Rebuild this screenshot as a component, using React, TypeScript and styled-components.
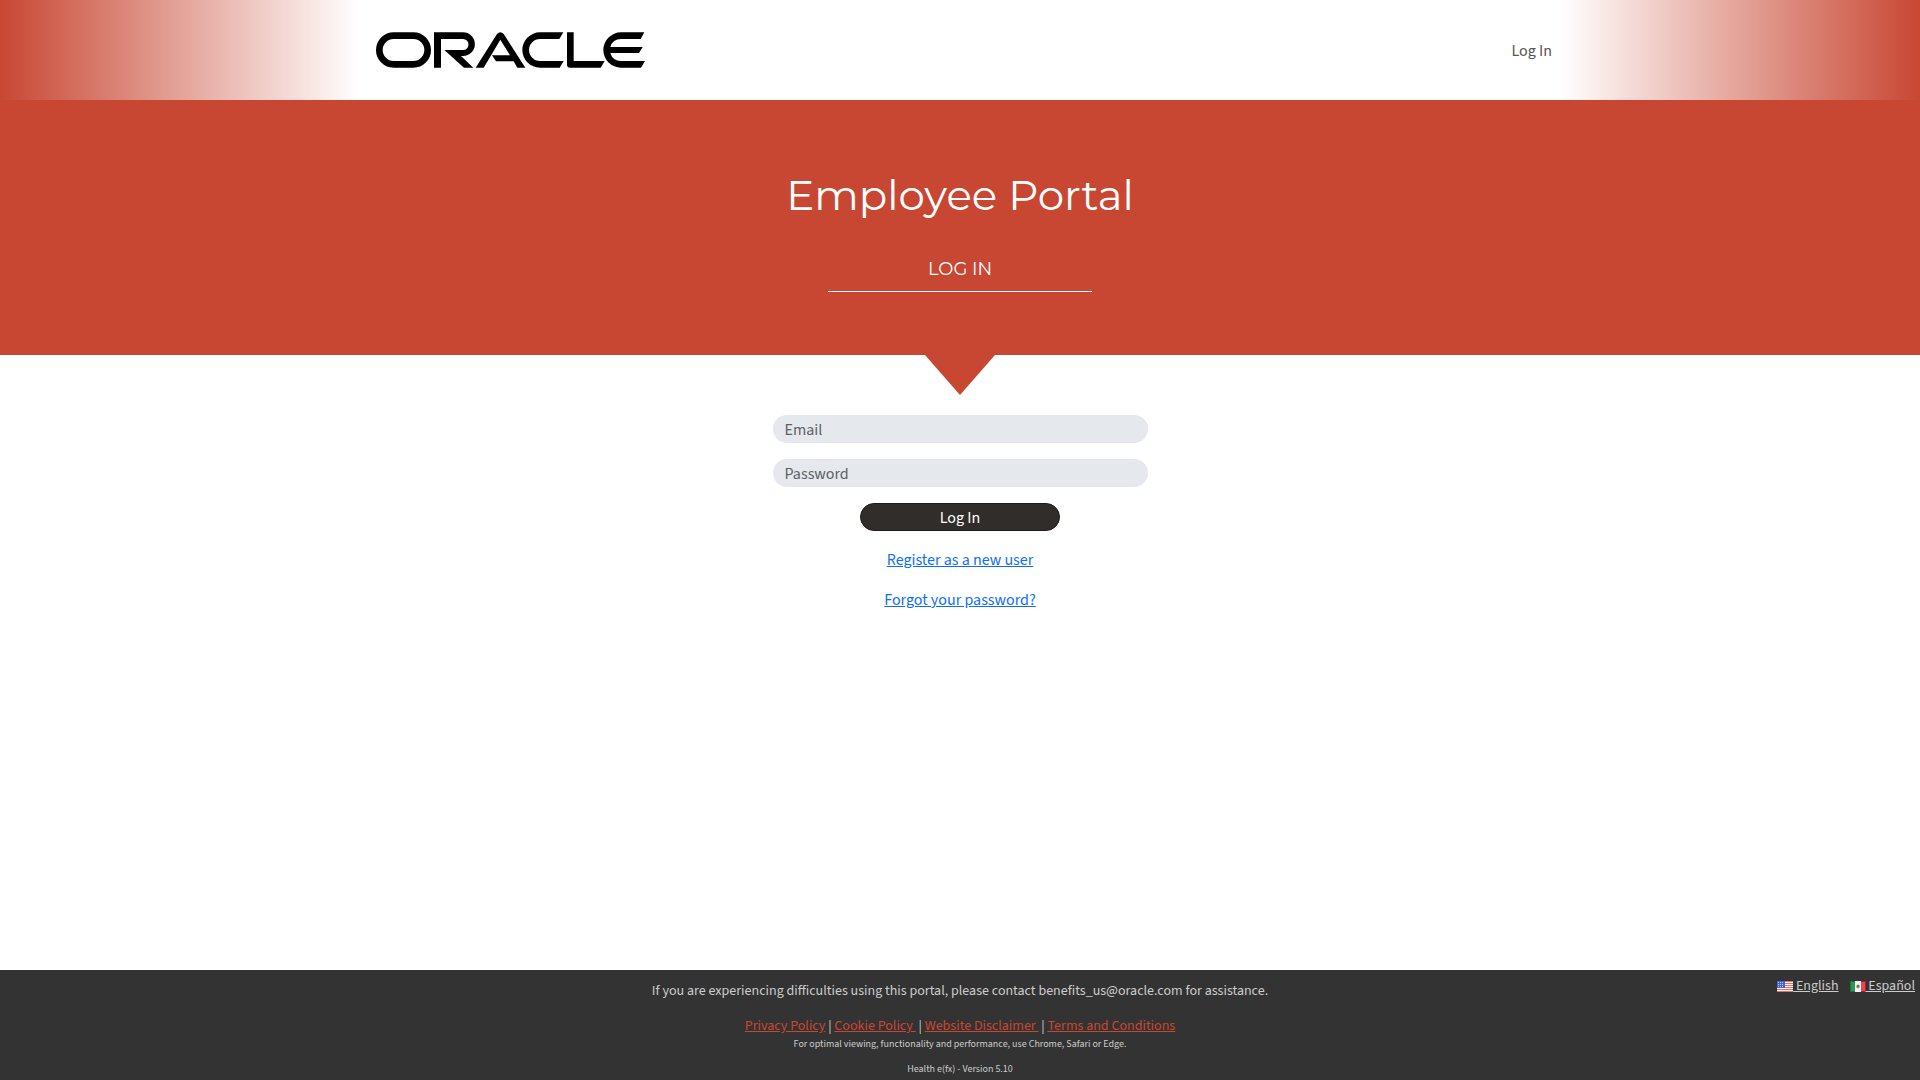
import React from "react";
import styled, { createGlobalStyle } from "styled-components";

const brand = "#c84733";
const bodyFont = `"Source Sans Pro", "Source Sans 3", "Noto Sans CJK JP", sans-serif`;
const headingFont = `Montserrat, Inter, sans-serif`;

const GlobalStyle = createGlobalStyle`
  *, *::before, *::after { box-sizing: border-box; }
  body {
    margin: 0;
    background: #fff;
    color: #212529;
    font: 400 16px/24px ${bodyFont};
  }
`;

const Page = styled.div`
  min-height: 100vh;
  display: flex;
  flex-direction: column;
`;

const Header = styled.header`
  display: flex;
  justify-content: center;
  height: 100px;
  background: linear-gradient(
    to right,
    ${brand} 0,
    #fff 360px,
    #fff calc(100% - 360px),
    ${brand} 100%
  );
`;

const HeaderInner = styled.div`
  flex: 1;
  max-width: 1200px;
  padding: 0 8px 0 16px;
  display: flex;
  align-items: center;
  justify-content: space-between;
  background: #fff;
`;

const Logo = styled.svg`
  display: block;
  width: 269px;
  height: 36px;
`;

const NavLink = styled.a`
  padding-top: 2px;
  color: #555;
  text-decoration: none;
`;

const Hero = styled.section`
  position: relative;
  height: 255px;
  padding-top: 67px;
  display: flex;
  flex-direction: column;
  align-items: center;
  background: ${brand};
  color: #fff;
  font-family: ${headingFont};

  &::after {
    content: "";
    position: absolute;
    top: 100%;
    left: 50%;
    margin-left: -35px;
    border: 35px solid transparent;
    border-top: 40px solid ${brand};
    border-bottom: 0;
  }
`;

const Title = styled.h1`
  margin: 0;
  font-size: 42px;
  line-height: 56px;
  font-weight: 400;
`;

const Subtitle = styled.h2`
  width: 264px;
  margin: 34px 0 0;
  padding-bottom: 10px;
  border-bottom: 1px solid #fff;
  font-size: 18px;
  line-height: 24px;
  font-weight: 400;
  text-align: center;
  text-transform: uppercase;
`;

const Main = styled.main`
  flex: 1;
  padding-top: 60px;
`;

const Form = styled.form`
  width: 375px;
  margin: 0 auto;
  display: flex;
  flex-direction: column;
  align-items: center;
  gap: 16px;
`;

const Field = styled.input`
  width: 100%;
  height: 28px;
  padding: 2px 12px 0;
  border: 0;
  border-radius: 14px;
  background: #e5e8ed;
  color: #212529;
  font: inherit;

  &::placeholder {
    color: #5d6165;
    opacity: 1;
  }
`;

const Submit = styled.button`
  width: 200px;
  height: 28px;
  padding: 2px 0 0;
  border: 1px solid #1f1b18;
  border-radius: 14px;
  background: #312d2a;
  color: #fff;
  font: inherit;
  cursor: pointer;
`;

const FormLinks = styled.div`
  padding-top: 1px;
  display: flex;
  flex-direction: column;
  align-items: center;
  gap: 16px;
`;

const FormLink = styled.a`
  color: #0d6efd;
`;

const Footer = styled.footer`
  position: relative;
  height: 110px;
  padding-top: 9px;
  background: #333;
  color: #ccc;
  text-align: center;
  font-size: 14px;
  line-height: 24px;
`;

const Notice = styled.p`
  margin: 0 0 11px;
`;

const Policies = styled.nav`
  line-height: 24px;
`;

const PolicyLink = styled.a`
  color: ${brand};
  white-space: pre;
`;

const FinePrint = styled.p<{ $gap: number }>`
  margin: ${(p) => p.$gap}px 0 0;
  font-size: 10px;
  line-height: 12px;
`;

const Languages = styled.div`
  position: absolute;
  top: 5px;
  right: 5px;
  display: flex;
  gap: 11px;
`;

const LanguageLink = styled.a`
  color: #ccc;
  line-height: 22px;
`;

const Flag = styled.svg`
  width: 16px;
  height: 11px;
  vertical-align: -2px;
`;

const OracleLogo = () => (
  <Logo viewBox="48 97 807 106" role="img" aria-label="Oracle">
    <rect x="58" y="107" width="145" height="86" rx="43" fill="none" stroke="#000" strokeWidth="20" />
    <path d="M222 203V97H309a35.5 35.5 0 0 1 0 71H303L340 203H312L253 150H309a16.5 16.5 0 0 0 0-33H243V203Z" />
    <path d="M347 203L411 102Q421 92 431 102L496 203H472L461 184H408L396 166H450L421 119L371 203Z" />
    <path d="M610 97L598 117H540a33 33 0 0 0 0 66H611L599 203H540a53 53 0 0 1 0-106Z" />
    <path d="M621 97H641V183H734L722 203H630Q621 203 621 194Z" />
    <path d="M853 97L842 117H783Q758 117 751 141H848L837 159H751Q758 183 783 183H855L843 203H783a53 53 0 0 1 0-106Z" />
  </Logo>
);

const stripes = [0, 1, 2, 3, 4];

const UsFlag = () => (
  <Flag viewBox="0 0 16 11" aria-hidden="true">
    <rect width="16" height="11" fill="#f26a5a" />
    {stripes.map((i) => (
      <rect key={i} y={i * 2 + 1} width="16" height="1" fill="#fff" />
    ))}
    <rect width="8" height="7" fill="#3d64d8" />
    {[1, 3, 5].map((y) =>
      [1, 3, 5].map((x) => <rect key={`${x}-${y}`} x={x} y={y} width="1" height="1" fill="#b9c8f5" />)
    )}
  </Flag>
);

const MxFlag = () => (
  <Flag viewBox="0 0 16 11" aria-hidden="true">
    <rect width="16" height="11" fill="#f4f4f4" />
    <rect width="5" height="11" fill="#12773a" />
    <rect x="1" y="1" width="4" height="9" fill="#2f9557" />
    <rect x="11" width="5" height="11" fill="#c8102e" />
    <rect x="11" y="1" width="4" height="9" fill="#e24a4f" />
    <ellipse cx="8" cy="5.5" rx="1.7" ry="2" fill="#a58c62" />
    <path d="M7 4h2v2H7z" fill="#69705a" />
  </Flag>
);

export default function App() {
  return (
    <Page>
      <GlobalStyle />
      <Header>
        <HeaderInner>
          <OracleLogo />
          <NavLink href="#login">Log In</NavLink>
        </HeaderInner>
      </Header>
      <Hero>
        <Title>Employee Portal</Title>
        <Subtitle>Log In</Subtitle>
      </Hero>
      <Main>
        <Form id="login" onSubmit={(e) => e.preventDefault()}>
          <Field type="email" placeholder="Email" aria-label="Email" />
          <Field type="password" placeholder="Password" aria-label="Password" />
          <Submit type="submit">Log In</Submit>
          <FormLinks>
            <FormLink href="#register">Register as a new user</FormLink>
            <FormLink href="#forgot">Forgot your password?</FormLink>
          </FormLinks>
        </Form>
      </Main>
      <Footer>
        <Notice>
          If you are experiencing difficulties using this portal, please contact benefits_us@oracle.com for assistance.
        </Notice>
        <Policies>
          <PolicyLink href="#privacy">Privacy Policy</PolicyLink> |{" "}
          <PolicyLink href="#cookies">{"Cookie Policy "}</PolicyLink> |{" "}
          <PolicyLink href="#disclaimer">{"Website Disclaimer "}</PolicyLink> |{" "}
          <PolicyLink href="#terms">Terms and Conditions</PolicyLink>
        </Policies>
        <FinePrint $gap={0}>For optimal viewing, functionality and performance, use Chrome, Safari or Edge.</FinePrint>
        <FinePrint $gap={13}>Health e(fx) - Version 5.10</FinePrint>
        <Languages>
          <LanguageLink href="#en"><UsFlag /> English</LanguageLink>
          <LanguageLink href="#es"><MxFlag /> Español</LanguageLink>
        </Languages>
      </Footer>
    </Page>
  );
}
